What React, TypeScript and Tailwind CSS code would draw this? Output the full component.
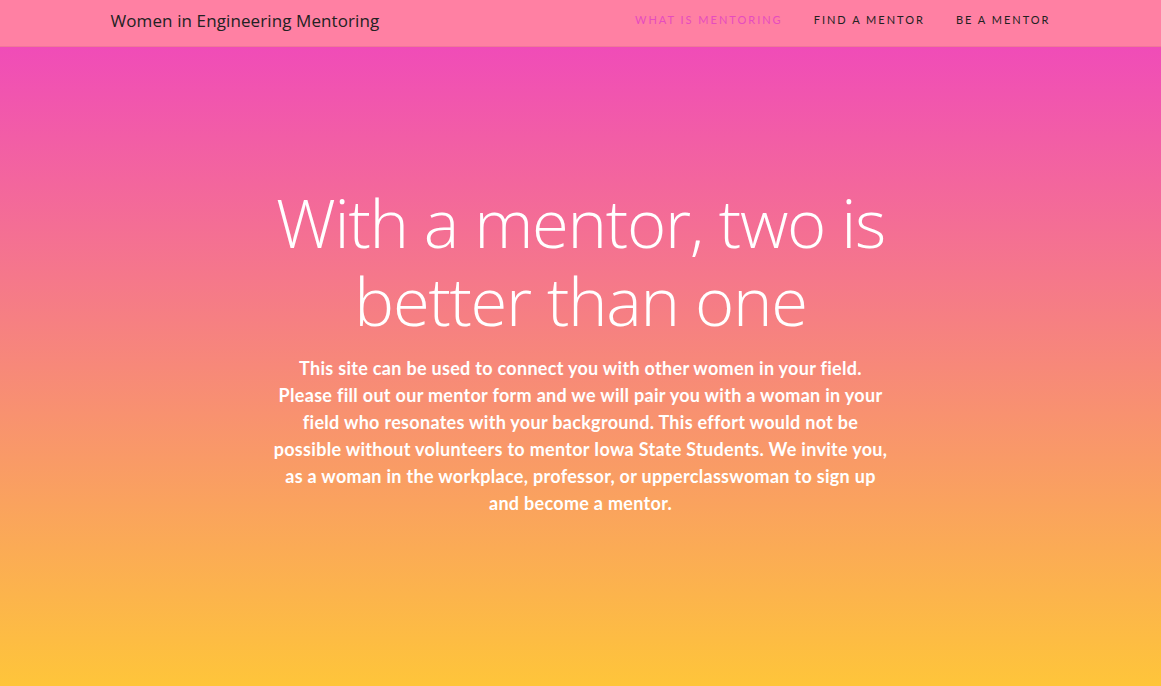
import React from "react";

export default function App() {
  const lines = [
    "This site can be used to connect you with other women in your field.",
    "Please fill out our mentor form and we will pair you with a woman in your",
    "field who resonates with your background. This effort would not be",
    "possible without volunteers to mentor Iowa State Students. We invite you,",
    "as a woman in the workplace, professor, or upperclasswoman to sign up",
    "and become a mentor.",
  ];
  return (
    <div className="w-[1161px] h-[686px] overflow-hidden flex flex-col">
      <nav className="h-[47px] shrink-0 bg-[#ff80a3] border-b border-[#f07898]">
        <div className="w-[970px] mx-auto px-[15px] h-full flex items-center justify-between pb-[5px]">
          <span
            className="text-[17px] text-[#222] tracking-[0.1px]"
            style={{ fontFamily: '"Open Sans", sans-serif' }}
          >
            Women in Engineering Mentoring
          </span>
          <ul
            className="flex items-center gap-[31px] text-[11px] tracking-[2px] uppercase"
            style={{ fontFamily: 'Lato, sans-serif' }}
          >
            <li className="text-[#e64cbf]">What is Mentoring</li>
            <li className="text-[#222]">Find a Mentor</li>
            <li className="text-[#222]">Be a Mentor</li>
          </ul>
        </div>
      </nav>
      <section className="flex-1 bg-[linear-gradient(to_bottom,#f04cb8,#fec53a)] text-white flex flex-col items-center pt-[136px]">
        <h1
          className="text-[67px] leading-[78px] font-light text-center tracking-[-1.3px]"
          style={{ fontFamily: '"Open Sans", sans-serif' }}
        >
          With a mentor, two is
          <br />
          better than one
        </h1>
        <p
          className="mt-[16px] text-[18px] leading-[27px] font-bold text-center tracking-[0.3px]"
          style={{ fontFamily: 'Lato, sans-serif' }}
        >
          {lines.map((l, i) => (
            <span key={i} className="block whitespace-nowrap">
              {l}
            </span>
          ))}
        </p>
      </section>
    </div>
  );
}
